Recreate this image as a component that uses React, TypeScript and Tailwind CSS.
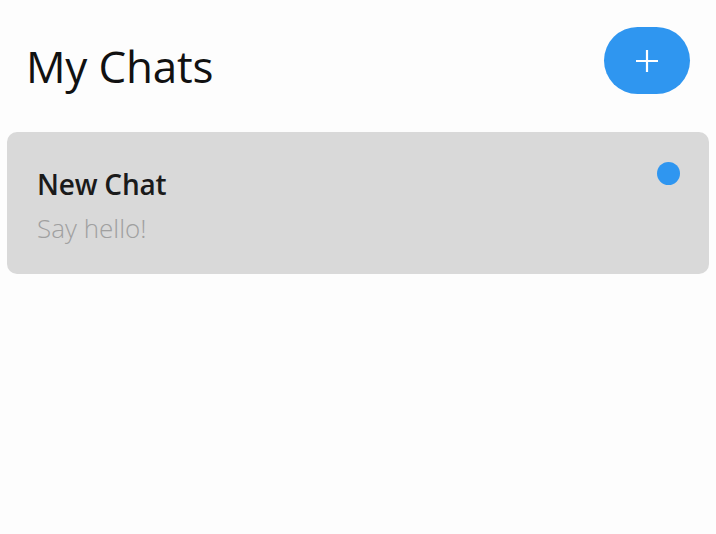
import React from "react";

export default function App() {
  return (
    <div className="w-[716px] h-[534px] bg-[#fdfdfd] overflow-hidden" style={{ fontFamily: '"Open Sans", "Noto Sans", sans-serif' }}>
      <div className="flex items-center justify-between pl-[26px] pr-[26px] pt-[27px]">
        <h1 className="text-[44px] leading-none text-[#111] font-medium tracking-[-0.2px] mt-[10px]">My Chats</h1>
        <button className="w-[86px] h-[67px] rounded-full bg-[#2f96f0] flex items-center justify-center">
          <svg width="26" height="26" viewBox="0 0 26 26">
            <path d="M13 2v22M2 13h22" stroke="#fff" strokeWidth="2.2" fill="none" />
          </svg>
        </button>
      </div>
      <div className="mx-[7px] mt-[38px] h-[142px] rounded-[10px] bg-[#d9d9d9] relative pl-[30px] pt-[38px]">
        <div className="text-[28px] leading-none font-semibold text-[#1a1a1a] tracking-[-0.2px]">New Chat</div>
        <div className="text-[26px] leading-none font-light text-[#a0a0a0] mt-[17px]">Say hello!</div>
        <div className="absolute right-[29px] top-[30px] w-[23px] h-[23px] rounded-full bg-[#2f96f0]" />
      </div>
    </div>
  );
}
